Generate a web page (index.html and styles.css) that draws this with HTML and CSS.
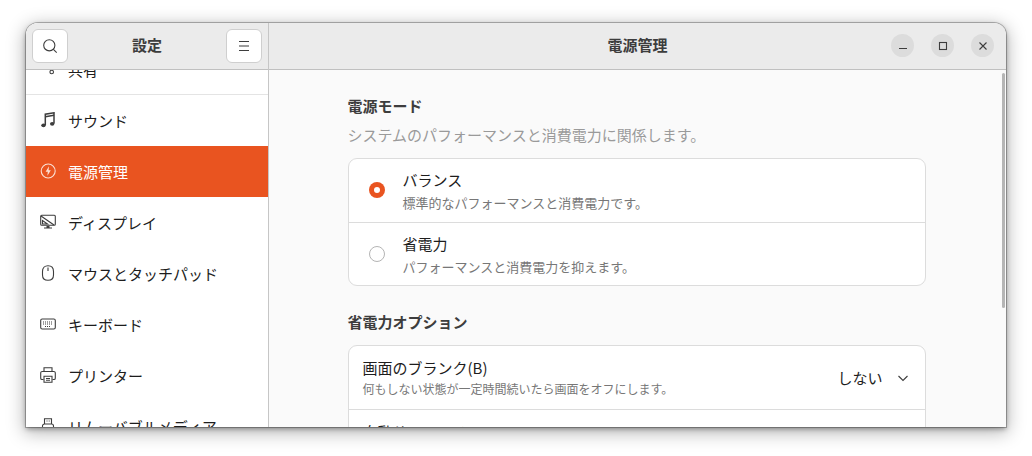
FILE: index.html
```html
<!DOCTYPE html>
<html lang="ja">
<head>
<meta charset="utf-8">
<title>設定</title>
<link rel="stylesheet" href="styles.css">
</head>
<body>
<div class="window">
  <aside class="sidebar">
    <header class="side-head">
      <button class="btn"><svg width="16" height="16" viewBox="0 0 16 16" class="ic"><circle cx="7.300" cy="7.300" r="5.600"/><path d="M11.400 11.400l3.300 3.300"/></svg></button>
      <div class="side-title">設定</div>
      <button class="btn"><svg width="16" height="16" viewBox="0 0 16 16" class="ic"><path d="M3 3.500h10M3 8h10M3 12.500h10"/></svg></button>
    </header>
    <nav class="side-list">
      <div class="item divided"><svg class="ic" width="16" height="16" viewBox="0 0 16 16"><circle cx="11.700" cy="11" r="1.800"/><circle cx="3" cy="5" r="2"/><circle cx="12" cy="1" r="2"/></svg><span>共有</span></div>
      <div class="item"><svg class="ic" width="16" height="16" viewBox="0 0 16 16"><path class="heavy" d="M5.300 13V2.200L14 .8v10.700"/><path class="heavy" d="M5.300 4.700L14 3.300"/><ellipse class="solid" cx="3.500" cy="13.300" rx="2.200" ry="1.900"/><ellipse class="solid" cx="12.200" cy="11.800" rx="2.200" ry="1.900"/></svg><span>サウンド</span></div>
      <div class="item active"><svg class="ic" width="16" height="16" viewBox="0 0 16 16"><circle cx="8.200" cy="8" r="7"/><path class="solid" d="M9 3.200L5.600 8.800h2.200l-.4 4 3.400-5.600H8.600z"/></svg><span>電源管理</span></div>
      <div class="item"><svg class="ic" width="16" height="16" viewBox="0 0 16 16"><rect x=".7" y="1.200" width="14.600" height="10" rx="1"/><path d="M1 2l13 9M2.500 6.500v3.500h5z"/><path class="solid" d="M6.500 12h3v1.500h2.500v1h-8v-1h2.500z"/></svg><span>ディスプレイ</span></div>
      <div class="item"><svg class="ic" width="16" height="16" viewBox="0 0 16 16"><path d="M8 .7C5 .7 2.500 2.500 2.500 6.500v3.500c0 3.200 2.200 5.300 5.500 5.300s5.500-2.100 5.500-5.300V6.500C13.500 2.500 11 .7 8 .7z"/><path d="M8 2.500v3.500"/></svg><span>マウスとタッチパッド</span></div>
      <div class="item"><svg class="ic" width="16" height="16" viewBox="0 0 16 16"><rect x=".7" y="3" width="14.600" height="10" rx="1.500"/><path class="dots" d="M3 6h10M3 8h10M5 10.500h6"/></svg><span>キーボード</span></div>
      <div class="item"><svg class="ic" width="16" height="16" viewBox="0 0 16 16"><path d="M4 4.500V.8h8v3.700M3.500 12.500H2a1.300 1.300 0 0 1-1.300-1.300V6A1.500 1.500 0 0 1 2.200 4.500h11.600A1.500 1.500 0 0 1 15.300 6v5.200a1.300 1.300 0 0 1-1.300 1.300h-1.500"/><path d="M4 9.200h8v6H4zM6 11.500h4M6 13.300h4"/></svg><span>プリンター</span></div>
      <div class="item"><svg class="ic" width="16" height="16" viewBox="0 0 16 16"><path d="M4.500 6V.7h7V6M2.500 15V8a2 2 0 0 1 2-2h7a2 2 0 0 1 2 2v7z"/><path d="M6.500 3h1M8.700 3h1"/></svg><span>リムーバブルメディア</span></div>
    </nav>
  </aside>
  <main class="main">
    <header class="main-head">
      <div class="main-title">電源管理</div>
      <div class="controls">
        <button class="ctl"><svg class="ic" width="16" height="16" viewBox="0 0 16 16"><path d="M4 10.500h8"/></svg></button>
        <button class="ctl"><svg class="ic" width="16" height="16" viewBox="0 0 16 16"><rect x="4.500" y="4.500" width="7" height="7"/></svg></button>
        <button class="ctl"><svg class="ic" width="16" height="16" viewBox="0 0 16 16"><path d="M4.500 4.500l7 7M11.500 4.500l-7 7"/></svg></button>
      </div>
    </header>
    <div class="content">
      <div class="scrollbar"></div>
      <section class="column">
        <h2 class="h">電源モード</h2>
        <p class="desc">システムのパフォーマンスと消費電力に関係します。</p>
        <div class="card">
          <div class="row radio-row">
            <span class="radio on"></span>
            <div><div class="t">バランス</div><div class="s">標準的なパフォーマンスと消費電力です。</div></div>
          </div>
          <div class="row radio-row">
            <span class="radio"></span>
            <div><div class="t">省電力</div><div class="s">パフォーマンスと消費電力を抑えます。</div></div>
          </div>
        </div>
        <h2 class="h second">省電力オプション</h2>
        <div class="card">
          <div class="row option-row">
            <div><div class="t">画面のブランク(B)</div><div class="s small">何もしない状態が一定時間続いたら画面をオフにします。</div></div>
            <div class="value"><span>しない</span><svg class="ic" width="16" height="16" viewBox="0 0 16 16"><path d="M3.500 6l4.500 4.500L12.500 6"/></svg></div>
          </div>
          <div class="row option-row">
            <div><div class="t">自動サスペンド</div><div class="s small">&nbsp;</div></div>
          </div>
        </div>
      </section>
    </div>
  </main>
</div>
</body>
</html>
```
FILE: styles.css
```css
* { box-sizing: border-box; }
html, body { margin: 0; height: 100%; background: #fff; }
body {
  padding: 23px 26px 29px;
  font-family: "Noto Sans CJK JP", "Noto Sans", sans-serif;
  font-size: 15px;
  color: #1d1d1d;
  overflow: hidden;
}
.window {
  display: flex;
  height: 404px;
  border-radius: 12px 12px 0 0;
  overflow: hidden;
  box-shadow: 0 0 0 1px rgba(0,0,0,.25), 0 2px 5px rgba(0,0,0,.35), 0 4px 18px 2px rgba(0,0,0,.28);
  background: #fafafa;
}
.ic { fill: none; stroke: #3d3d3d; stroke-width: 1.1; display: block; flex: none; }
.ic .solid { fill: #3d3d3d; stroke: none; }
.ic .heavy { stroke-width: 1.5; }
.ic .dots { stroke-dasharray: 1 1; }
.sidebar { width: 243px; flex: none; display: flex; flex-direction: column; background: #fff; border-right: 1px solid #c6c6c6; }
.side-head {
  height: 47px; flex: none; display: flex; align-items: center; justify-content: space-between;
  padding: 0 6px; background: #ebebeb; border-bottom: 1px solid #c0c0c0; position: relative; z-index: 1;
}
.btn {
  width: 36px; height: 34px; padding: 0; display: flex; align-items: center; justify-content: center;
  background: #fff; border: 1px solid #cfcfcf; border-radius: 6px;
}
.side-title, .main-title { font-weight: 700; font-size: 15px; line-height: 22px; padding-bottom: 2px; color: #3d3d3d; }
.side-list { flex: 1; overflow: hidden; margin-top: -26px; }
.item { height: 51px; display: flex; align-items: center; gap: 12px; padding: 0 0 0 14px; font-size: 15px; }
.item .ic { margin-bottom: 1px; }
.item.divided { border-bottom: 1px solid #e4e4e4; }
.active { background: #e95420; color: #fff; }
.active .ic { stroke: #fbe0d5; }
.active .ic .solid { fill: #fbe0d5; stroke: none; }
.main { flex: 1; min-width: 0; display: flex; flex-direction: column; }
.main-head {
  height: 47px; flex: none; display: flex; align-items: center; justify-content: center; position: relative;
  background: #ebebeb; border-bottom: 1px solid #c0c0c0;
}
.controls { position: absolute; right: 12px; top: 11px; display: flex; gap: 17px; }
.ctl { width: 23px; height: 23px; padding: 0; border: 0; border-radius: 50%; background: #dcdcdc; display: flex; align-items: center; justify-content: center; }
.content { flex: 1; min-height: 0; overflow: hidden; position: relative; display: flex; justify-content: center; padding-right: 1px; }
.scrollbar { position: absolute; right: 1px; top: 3px; width: 3px; height: 235px; border-radius: 2px; background: #b5b5b5; }
.column { width: 578px; padding-top: 24px; margin-left: -1px; }
.h { margin: 0; font-size: 15px; line-height: 24px; font-weight: 700; color: #3d3d3d; }
.desc { margin: 5px 0 11px; font-size: 15px; line-height: 24px; color: #9a9a9a; }
.second { margin-top: 24px; margin-bottom: 11px; }
.card { background: #fff; border: 1px solid #dcdcdc; border-radius: 9px; }
.row { height: 63px; display: flex; align-items: center; }
.row + .row { border-top: 1px solid #dcdcdc; }
.radio-row { padding-left: 20px; gap: 18px; }
.radio-row + .radio-row > div, .option-row + .option-row > div { margin-top: 2px; }
.option-row { padding: 0 14px; justify-content: space-between; }
.radio { width: 16px; height: 16px; border-radius: 50%; border: 1px solid #b4b4b4; flex: none; background: #fff; }
.radio.on { background: #e95420; border: 0; margin-bottom: 1px; display: flex; align-items: center; justify-content: center; }
.radio.on::after { content: ""; width: 6px; height: 6px; border-radius: 50%; background: #fff; }
.t { font-size: 15px; line-height: 22px; }
.s { font-size: 13px; line-height: 20px; color: #777; margin-top: 2px; }
.small { font-size: 12px; margin-top: 0; }
.value { display: flex; align-items: center; gap: 12px; font-size: 15px; }
```
